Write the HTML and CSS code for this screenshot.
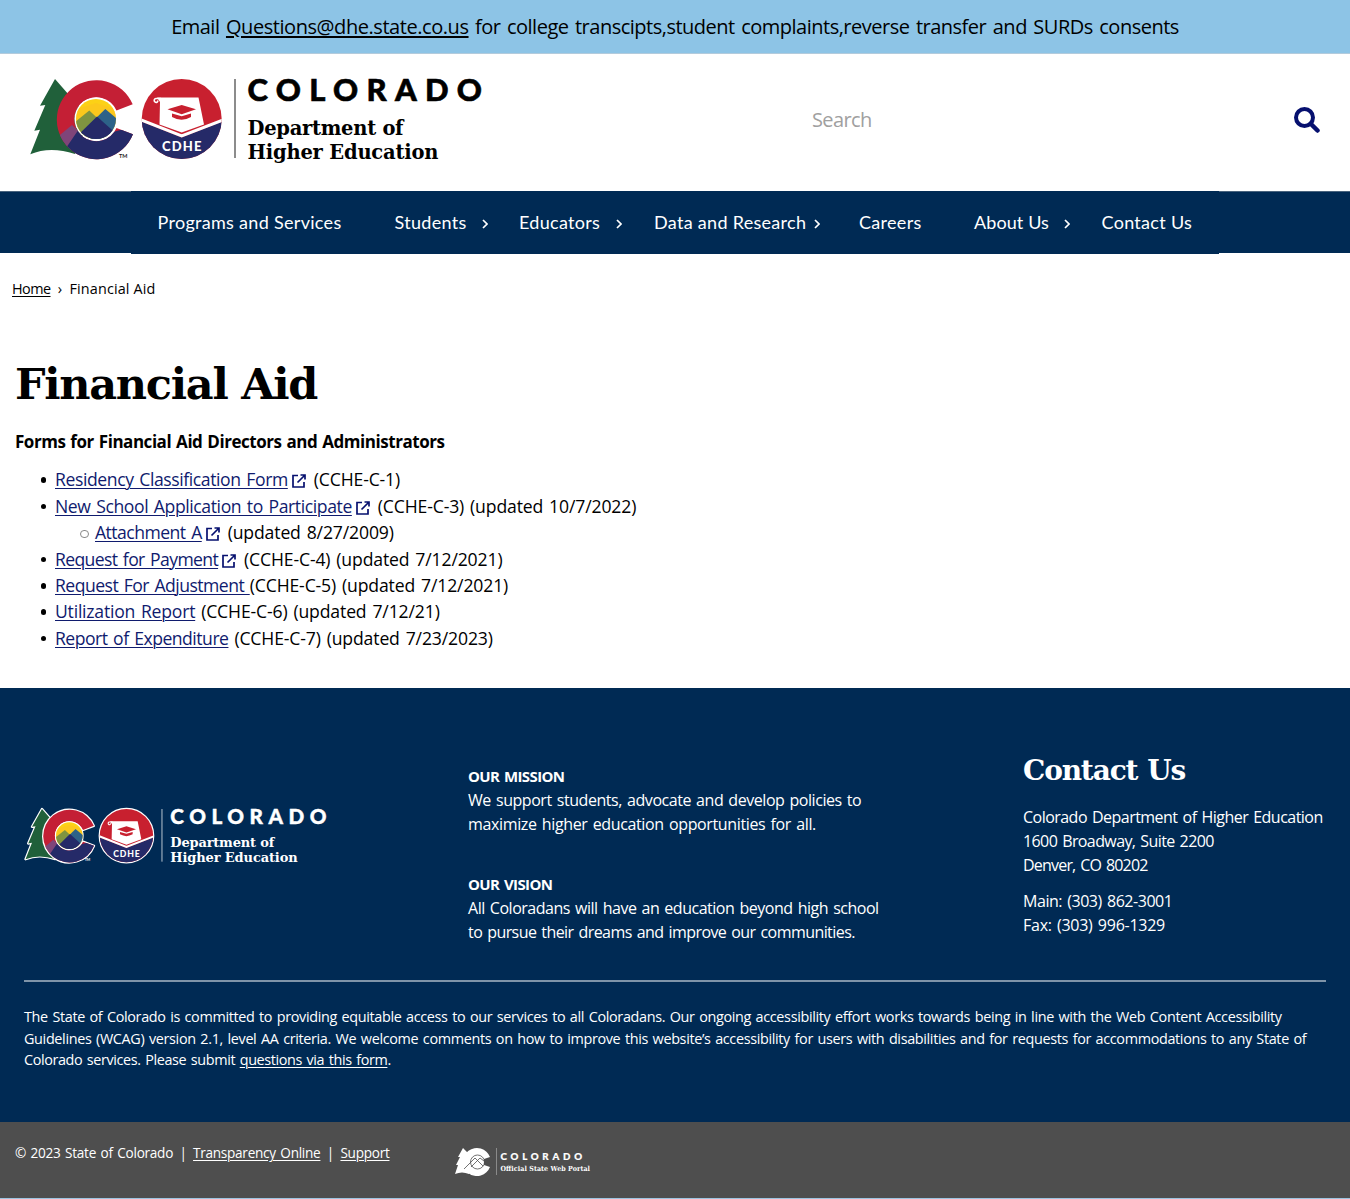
FILE: index.html
```html
<!DOCTYPE html>
<html lang="en">
<head>
<meta charset="utf-8">
<title>Financial Aid | Colorado Department of Higher Education</title>
<link rel="stylesheet" href="styles.css">
</head>
<body>
<svg class="defs" width="0" height="0" aria-hidden="true">
  <defs>
    <clipPath id="sun"><circle cx="66" cy="41" r="20"/></clipPath>
    <clipPath id="ring"><path d="M102.7 26.3A39.500 39.500 0 1 0 103 56.3L86.500 50A22 22 0 1 1 86.500 32.500Z"/></clipPath>
    <clipPath id="badge"><circle cx="151.700" cy="41" r="40"/></clipPath>
    <symbol id="marks" viewBox="-2 -2 200 90" overflow="visible">
      <path class="edge" fill="#20603a" d="M25 1 10 27.700 15.300 27 4.300 52.700 10 51.700.3 76.300Q20 68 45 76L60 41Z"/>
      <path class="edge" fill="#c41f35" d="M102.700 26.300A39.500 39.500 0 1 0 103 56.300L86.500 50A22 22 0 1 1 86.500 32.500Z"/>
      <g clip-path="url(#ring)">
        <path fill="#7f4579" d="M24 62 42 47 52 56 40 74 20 74Z"/>
        <path fill="#252a68" d="M36 70 49 51 60 60 110 47V90H20V76Z"/>
      </g>
      <circle cx="66" cy="41" r="21.500" fill="#fff"/>
      <g clip-path="url(#sun)">
        <path fill="#fcd116" d="M40 15h52v52H40z"/>
        <path fill="#fbb829" d="M40 33 66 25 92 33V60H40Z" opacity=".35"/>
        <path fill="#7f9440" d="M40 48 59.300 32.500 80 52V65H40Z"/>
        <path fill="#2d6288" d="M60 46 75.300 31 92 45V65H60Z"/>
        <path fill="#252a68" d="M44 61 67 38.500 92 61V68H44Z"/>
      </g>
      <circle class="edge" cx="151.700" cy="41" r="40" fill="#c8202f"/>
      <g clip-path="url(#badge)">
        <path fill="#252a68" d="M110 43 151.700 59.500 194 43V85H110Z"/>
        <path fill="none" stroke="#fff" stroke-width="3" d="M110 41.500 151.700 58 194 41.500"/>
      </g>
      <path fill="#fff" d="M127 19.500H168.500L174 46.500 151.700 54.500 129.500 46.500 130 24Z"/>
      <path fill="none" stroke="#fff" stroke-width="1.600" d="M131 20.500H126Q123.500 21 124.500 23.500 127 26 128 22.500"/>
      <path fill="#c8202f" d="M151.700 27 166 31.300 151.700 36.300 137.500 31.300ZM142 35.500 151.700 38.200 161 35.500V39Q151.700 44.500 142 39Z"/>
      <text class="cdhe" x="132" y="72.700" textLength="39.500">CDHE</text>
    </symbol>
  </defs>
</svg>

<div class="banner">Email <a href="#">Questions@dhe.state.co.us</a> for college transcipts,student complaints,reverse transfer and SURDs consents</div>

<header class="header">
  <svg class="logo" viewBox="-2 -2 458 90" role="img" aria-label="Colorado Department of Higher Education">
    <use href="#marks" x="-2" y="-2" width="200" height="90"/>
    <text class="tm" x="89" y="79.700">TM</text>
    <path class="rule" d="M205 1V80"/>
    <text class="state" x="217.500" y="23" textLength="234.500">COLORADO</text>
    <text class="dept" x="217.500" y="57.300" textLength="156">Department of</text>
    <text class="dept" x="217.500" y="80.700" textLength="191">Higher Education</text>
  </svg>
  <form class="search">
    <span>Search</span>
    <svg width="26" height="26" viewBox="0 0 26 26" fill="none" stroke="#06106f"><circle cx="10.500" cy="10.500" r="8.500" stroke-width="4"/><path d="M17 17 23.500 23.500" stroke-width="4.500" stroke-linecap="round"/></svg>
  </form>
</header>

<nav class="nav">
  <ul>
    <li>Programs and Services</li>
    <li>Students<svg class="chev a" viewBox="0 0 6 10"><path d="M1 1 5 5 1 9"/></svg></li>
    <li>Educators<svg class="chev b" viewBox="0 0 6 10"><path d="M1 1 5 5 1 9"/></svg></li>
    <li>Data and Research<svg class="chev c" viewBox="0 0 6 10"><path d="M1 1 5 5 1 9"/></svg></li>
    <li>Careers</li>
    <li class="snug">About Us<svg class="chev a" viewBox="0 0 6 10"><path d="M1 1 5 5 1 9"/></svg></li>
    <li>Contact Us</li>
  </ul>
</nav>

<main class="main">
  <div class="crumbs"><a href="#">Home</a><i>›</i><span>Financial Aid</span></div>
  <h1>Financial Aid</h1>
  <h2>Forms for Financial Aid Directors and Administrators</h2>
  <ul class="forms">
    <li><a href="#">Residency Classification Form</a><svg class="ext" viewBox="0 0 14 14"><path d="M6 1.500H1V13H12V8M8.500 1H13V5.500M13 1 5.500 8.500"/></svg> (CCHE-C-1)</li>
    <li><a href="#">New School Application to Participate</a><svg class="ext" viewBox="0 0 14 14"><path d="M6 1.500H1V13H12V8M8.500 1H13V5.500M13 1 5.500 8.500"/></svg> (CCHE-C-3) (updated 10/7/2022)
      <ul>
        <li><a class="ls-53" href="#">Attachment A</a><svg class="ext" viewBox="0 0 14 14"><path d="M6 1.500H1V13H12V8M8.500 1H13V5.500M13 1 5.500 8.500"/></svg> (updated 8/27/2009)</li>
      </ul>
    </li>
    <li><a class="ls-63" href="#">Request for Payment</a><svg class="ext" viewBox="0 0 14 14"><path d="M6 1.500H1V13H12V8M8.500 1H13V5.500M13 1 5.500 8.500"/></svg> (CCHE-C-4) (updated 7/12/2021)</li>
    <li><a class="ls-53" href="#">Request For Adjustment </a>(CCHE-C-5) (updated 7/12/2021)</li>
    <li><a class="ls-22" href="#">Utilization Report</a> (CCHE-C-6) (updated 7/12/21)</li>
    <li><a class="ls-50" href="#">Report of Expenditure</a> (CCHE-C-7) (updated 7/23/2023)</li>
  </ul>
</main>

<footer class="footer">
  <div class="cols">
    <svg class="logo small" viewBox="-2 -2 458 90" role="img" aria-label="Colorado Department of Higher Education">
      <use href="#marks" x="-2" y="-2" width="200" height="90"/>
      <text class="tm" x="89" y="79.700">TM</text>
      <path class="rule" d="M205 1V80"/>
      <text class="state" x="217.500" y="23" textLength="234.500">COLORADO</text>
      <text class="dept" x="217.500" y="57.300" textLength="156">Department of</text>
      <text class="dept" x="217.500" y="80.700" textLength="191">Higher Education</text>
    </svg>
    <div class="about">
      <p><b>OUR MISSION</b><br>We support students, advocate and develop policies to<br><span class="ls-36">maximize higher education opportunities for all.</span></p>
      <p><b>OUR VISION</b><br><span class="ls-48">All Coloradans will have an education beyond high school</span><br><span class="ls-57">to pursue their dreams and improve our communities.</span></p>
    </div>
    <div class="contact">
      <h3>Contact Us</h3>
      <p><span class="ls-53">Colorado Department of Higher Education</span><br><span class="ls-60">1600 Broadway, Suite 2200</span><br><span class="ls-80">Denver, CO 80202</span></p>
      <p>Main: (303) 862-3001<br><span class="ls-26">Fax: (303) 996-1329</span></p>
    </div>
  </div>
  <p class="statement">The State of Colorado is committed to providing equitable access to our services to all Coloradans. Our ongoing accessibility effort works towards being in line with the Web Content Accessibility<br>Guidelines (WCAG) version 2.1, level AA criteria. We welcome comments on how to improve this website’s accessibility for users with disabilities and for requests for accommodations to any State of<br><span class="ls-38">Colorado services. Please submit <a href="#">questions via this form</a>.</span></p>
</footer>

<div class="bottom">
  <div class="legal"><span>© 2023 State of Colorado</span><i>|</i><a href="#">Transparency Online</a><i>|</i><a href="#">Support</a></div>
  <svg class="portal" width="138" height="30" viewBox="0 0 138 30" role="img" aria-label="Colorado Official State Web Portal">
    <g fill="#fff"><path d="M9 1 4 10 6 10 2 18 4 18 1 27Q8 24 15 27L22 14Z"/><path d="M36 10A14 14 0 1 0 36 20L30 18V12Z"/></g>
    <g fill="none" stroke="#4e4e4e" stroke-width=".8"><circle cx="23.500" cy="15" r="7"/><path d="M10 22 21 11 29 19M17 20 26 11 30 14"/></g>
    <path stroke="#999" stroke-width=".8" d="M42.500 1V28"/>
    <text class="p1" x="46.500" y="12.500" textLength="81.500">COLORADO</text>
    <text class="p2" x="46.500" y="24" textLength="89.500">Official State Web Portal</text>
  </svg>
</div>
</body>
</html>
```
FILE: styles.css
```css
* { box-sizing: border-box; }
body { margin: 0; background: #fff; color: #000; font-family: "Open Sans", "Noto Sans", sans-serif; white-space: nowrap; }
a { color: inherit; text-decoration: underline; text-decoration-thickness: 1px; text-underline-offset: 2px; }
p, h1, h2, h3, ul { margin: 0; padding: 0; }
ul { list-style: none; }
.defs { display: block; width: 0; height: 0; }

.banner { height: 54px; border-bottom: 1px solid #b3cbdc; background: #8dc4e6; text-align: center; font-size: 20px; line-height: 54px; letter-spacing: -.5px; word-spacing: 1.800px; }
.banner a { text-decoration-thickness: 1.500px; letter-spacing: -.44px; }

.header { display: flex; justify-content: space-between; height: 137px; padding: 22px 30px 0 28px; }
.logo { display: block; width: 458px; height: 90px; overflow: visible; }
.cdhe { font: 900 13px Lato, sans-serif; fill: #fff; }
.logo .tm { font: 700 5.500px Lato, sans-serif; fill: #222; }
.logo .rule { stroke: #666; stroke-width: 1.500; }
.logo .state { font: 900 31px Lato, sans-serif; fill: #000; stroke: #000; stroke-width: .6; }
.logo .dept { font: 700 19.500px "DejaVu Serif", serif; fill: #000; }
.logo.small { width: 305.300px; height: 60px; }
.logo.small text { fill: #fff; }
.logo.small .state { stroke: #fff; }
.logo.small .rule { stroke: #b9c4d0; }
.logo.small use { --edge: #fff; }
.edge { stroke: var(--edge, none); stroke-width: 3.600; stroke-linejoin: round; paint-order: stroke; }
.search { display: flex; justify-content: space-between; align-items: center; width: 508px; height: 88px; color: #a0a0a0; font-size: 20px; letter-spacing: -.6px; }
.search span { margin-top: -1px; }

.nav { height: 62px; border-top: 1px solid #49637d; background: #002a54; color: #fff; }
.nav ul { display: grid; grid-template-columns: 237px 124.500px 135px 205px 115px 127.500px 144px; width: 1088px; height: 63px; margin: 0 131px; position: relative; top: -1px; background: #002a54; }
.nav li { display: flex; align-items: center; justify-content: space-between; padding: 0 0 2px 26.500px; font: 18px Lato, sans-serif; letter-spacing: .3px; }
.nav .snug { letter-spacing: .1px; }
.chev { width: 6px; height: 10px; margin-top: 4px; fill: none; stroke: #fff; stroke-width: 1.700; }
.chev.a { margin-right: 5px; }
.chev.b { margin-right: 6px; }
.chev.c { margin-right: 13px; }

.main { height: 435px; padding: 24px 15px 0; }
.crumbs { display: flex; margin-left: -3px; font-size: 14.400px; line-height: 24px; letter-spacing: .14px; }
.crumbs a { letter-spacing: -.54px; }
.crumbs i { width: 19px; text-align: center; font-style: normal; }
h1 { margin-top: 56px; font: 700 43px/54px "DejaVu Serif", serif; letter-spacing: -1.280px; }
h2 { margin-top: 18px; font-size: 17px; line-height: 26.400px; font-weight: 700; letter-spacing: -.46px; word-spacing: 1px; }
.forms { margin-top: 11px; font-size: 17.600px; line-height: 26.400px; letter-spacing: -.14px; word-spacing: 1.500px; }
.forms li { position: relative; padding-left: 40px; }
.forms li::before { content: ""; position: absolute; left: 25.500px; top: 11px; width: 5.500px; height: 5.500px; border-radius: 50%; background: #000; }
.forms li li::before { left: 25px; top: 10.500px; width: 6.500px; height: 6.500px; border: 1px solid #888; background: none; }
.forms a { color: #101b6e; letter-spacing: -.41px; }
.ext { width: 14px; height: 14px; margin: 0 2px 0 4px; vertical-align: -2px; fill: none; stroke: #06106f; stroke-width: 1.700; }

.footer { height: 434px; padding: 48px 24px 0; background: #002a54; color: #fff; font-size: 16px; line-height: 24px; }
.cols { display: grid; grid-template-columns: 444px 555px 1fr; height: 246px; border-bottom: 2px solid #7f94a9; letter-spacing: -.45px; word-spacing: 1.400px; }
.cols .logo { margin-top: 70.500px; letter-spacing: 0; word-spacing: 0; }
.about { padding-top: 28px; }
.about p + p { margin-top: 36px; }
.about b { font-size: 15px; letter-spacing: -.62px; }
h3 { padding-top: 16px; font: 700 28px/38px "DejaVu Serif", serif; letter-spacing: -1.150px; }
.contact h3 + p { margin-top: 15px; }
.contact p + p { margin-top: 12px; }
.statement { margin-top: 24px; font-size: 14.400px; line-height: 21.600px; letter-spacing: -.341px; word-spacing: 1.200px; }

.bottom { display: flex; height: 77px; padding: 20px 15px 0; border-bottom: 1px solid #9cc4e0; background: #4e4e4e; color: #fff; font-size: 13.600px; line-height: 22px; }
.legal { display: flex; width: 439px; letter-spacing: -.28px; word-spacing: 1.300px; }
.legal i { width: 20px; text-align: center; font-style: normal; }
.portal { margin-top: 5px; }
.p1 { font: 900 9.700px Lato, sans-serif; fill: #fff; stroke: #fff; stroke-width: .2; }
.p2 { font: 700 7px "DejaVu Serif Condensed", "DejaVu Serif", serif; fill: #fff; }

.forms .ls-22 { letter-spacing: -.22px; }
.ls-26 { letter-spacing: -.26px; }
.ls-36 { letter-spacing: -.36px; }
.ls-38 { letter-spacing: -.38px; }
.ls-48 { letter-spacing: -.48px; }
.forms .ls-50 { letter-spacing: -.5px; }
.ls-53, .forms .ls-53 { letter-spacing: -.53px; }
.ls-57 { letter-spacing: -.57px; }
.ls-60 { letter-spacing: -.6px; }
.forms .ls-63 { letter-spacing: -.63px; }
.ls-80 { letter-spacing: -.8px; }
```
